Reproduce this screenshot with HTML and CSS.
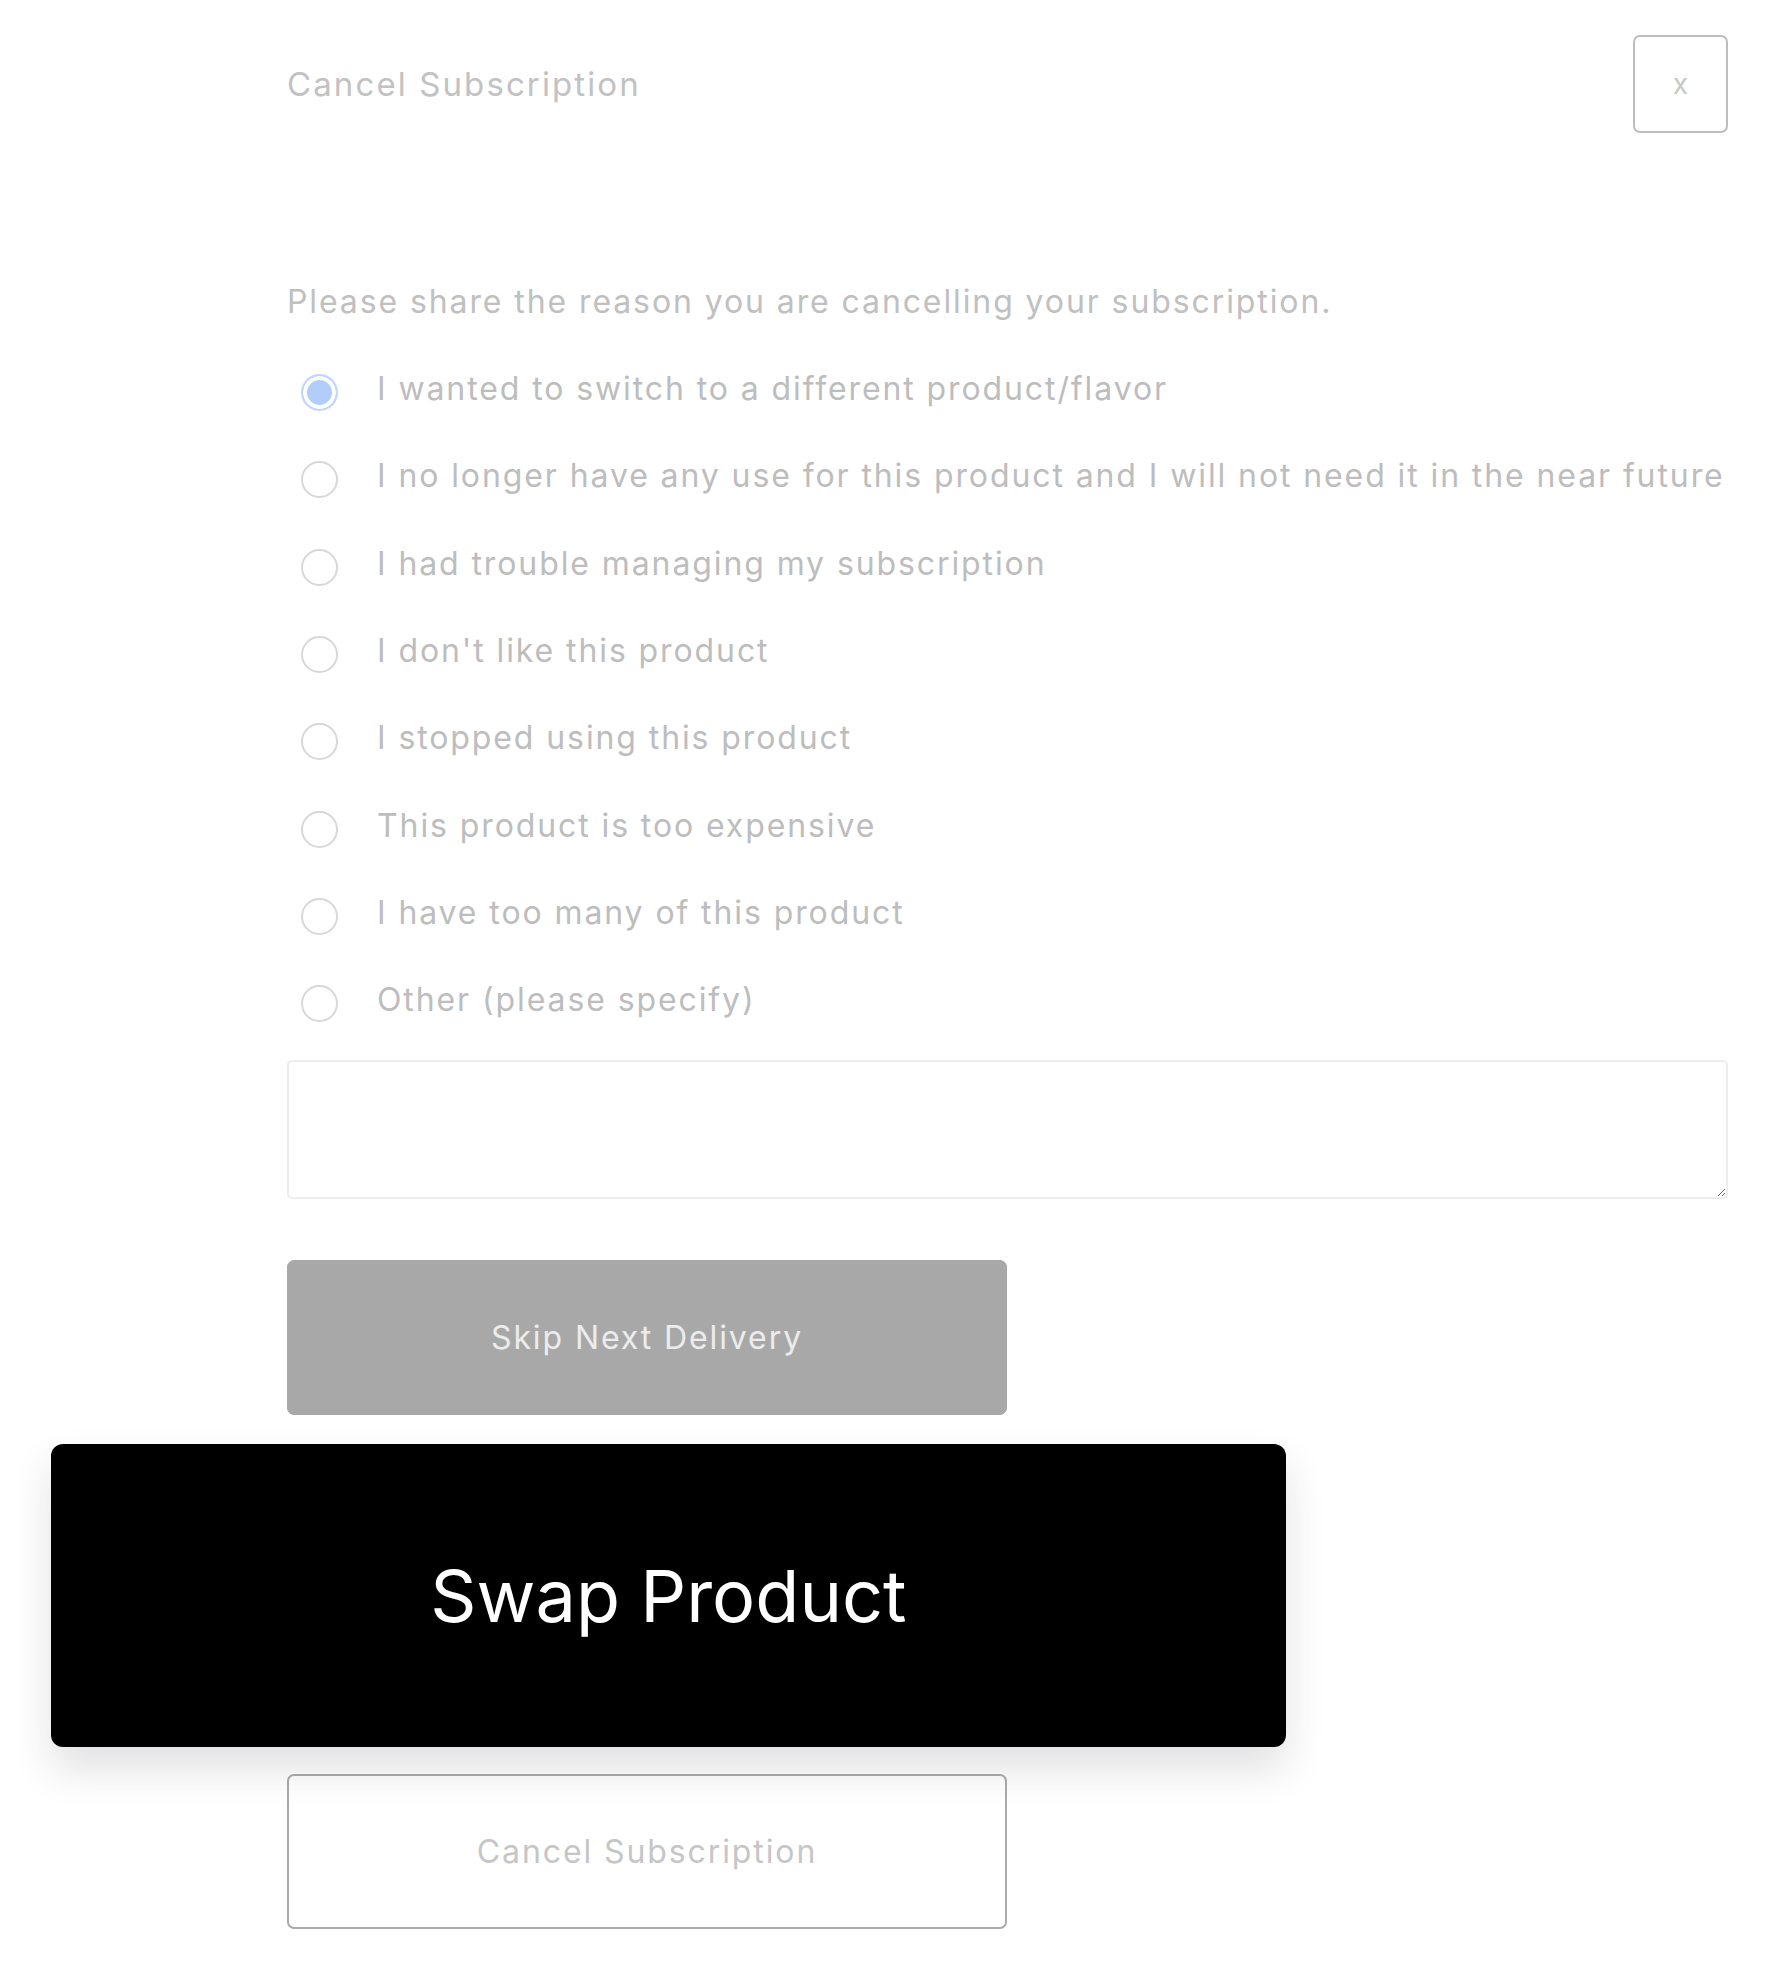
FILE: index.html
```
<!DOCTYPE html>
<html>
<head>
    <title>Cancel Subscription</title>
    <link rel="stylesheet" href="styles.css">
</head>
<body>
    <div class="modal">
        <div class="modal-header">
            <h1 class="modal-title">Cancel Subscription</h1>
            <button class="close-btn" type="button">x</button>
        </div>

        <form class="reason-form">
            <p class="prompt">Please share the reason you are cancelling your subscription.</p>

            <label class="option"><input type="radio" name="reason" checked><span>I wanted to switch to a different product/flavor</span></label>
            <label class="option"><input type="radio" name="reason"><span>I no longer have any use for this product and I will not need it in the near future</span></label>
            <label class="option"><input type="radio" name="reason"><span>I had trouble managing my subscription</span></label>
            <label class="option"><input type="radio" name="reason"><span>I don't like this product</span></label>
            <label class="option"><input type="radio" name="reason"><span>I stopped using this product</span></label>
            <label class="option"><input type="radio" name="reason"><span>This product is too expensive</span></label>
            <label class="option"><input type="radio" name="reason"><span>I have too many of this product</span></label>
            <label class="option"><input type="radio" name="reason"><span>Other (please specify)</span></label>

            <textarea class="other-text"></textarea>

            <div class="actions">
                <button type="button" class="btn btn-skip">Skip Next Delivery</button>
                <!-- space where the swap button sits; the highlighted copy covers it -->
                <div class="swap-slot"></div>
                <button type="button" class="btn btn-cancel">Cancel Subscription</button>
            </div>
        </form>
    </div>

    <!-- highlighted button shown over the faded modal -->
    <button type="button" class="swap-highlight">Swap Product</button>
</body>
</html>
```

FILE: styles.css
```
body {
    margin: 0;
    font-family: Inter, "Noto Sans", sans-serif;
    background: #fff;
    position: relative;
    min-height: 1964px;
}
.modal {
    width: 1441px;
    margin-left: 287px;
    padding-top: 35px;
    color: #bbbbbb;
    letter-spacing: 1.9px;
}
.modal-header {
    display: flex;
    justify-content: space-between;
    align-items: center;
    height: 98px;
}
.modal-title {
    margin: 0;
    font-size: 33px;
    font-weight: 400;
    letter-spacing: 2.1px;
    color: #c2c2c2;
}
.close-btn {
    width: 95px;
    height: 98px;
    border: 2px solid #bdbdbd;
    border-radius: 7px;
    background: #fff;
    color: #c8c8c8;
    font-family: inherit;
    font-size: 28px;
}
.reason-form {
    margin-top: 125px;
}
.prompt {
    margin: 0;
    height: 87px;
    line-height: 87px;
    font-size: 32px;
    color: #c0c0c0;
}
.option {
    display: flex;
    align-items: center;
    height: 87.3px;
    font-size: 32px;
    color: #bdbdbd;
}
.option input {
    appearance: none;
    width: 37px;
    height: 37px;
    margin: 0 39px 0 14px;
    border: 2px solid #d8d8d8;
    border-radius: 50%;
    background: #fff;
    position: relative;
    top: 4px;
}
.option input:checked {
    border-color: #c2d6fb;
    background: #b3cdfb;
    box-shadow: inset 0 0 0 4px #fff;
}
.other-text {
    display: block;
    box-sizing: border-box;
    width: 1441px;
    height: 139px;
    margin-top: 17px;
    border: 2px solid #ededed;
    border-radius: 5px;
    resize: vertical;
}
.actions {
    margin-top: 61px;
}
.btn {
    display: block;
    box-sizing: border-box;
    width: 720px;
    height: 155px;
    border-radius: 7px;
    font-family: inherit;
    font-size: 32px;
    letter-spacing: 1.9px;
}
.btn-skip {
    background: #a8a8a8;
    border: 1px solid #a8a8a8;
    color: #ececec;
}
.swap-slot {
    height: 359px;
}
.btn-cancel {
    background: #fff;
    border: 2px solid #ababab;
    color: #c6c6c6;
}
.swap-highlight {
    position: absolute;
    left: 51px;
    top: 1444px;
    width: 1235px;
    height: 303px;
    border: none;
    border-radius: 12px;
    background: #000;
    color: #fff;
    font-family: inherit;
    font-size: 72px;
    font-weight: 400;
    box-shadow: 0 22px 40px rgba(40, 40, 60, 0.14);
}
```
